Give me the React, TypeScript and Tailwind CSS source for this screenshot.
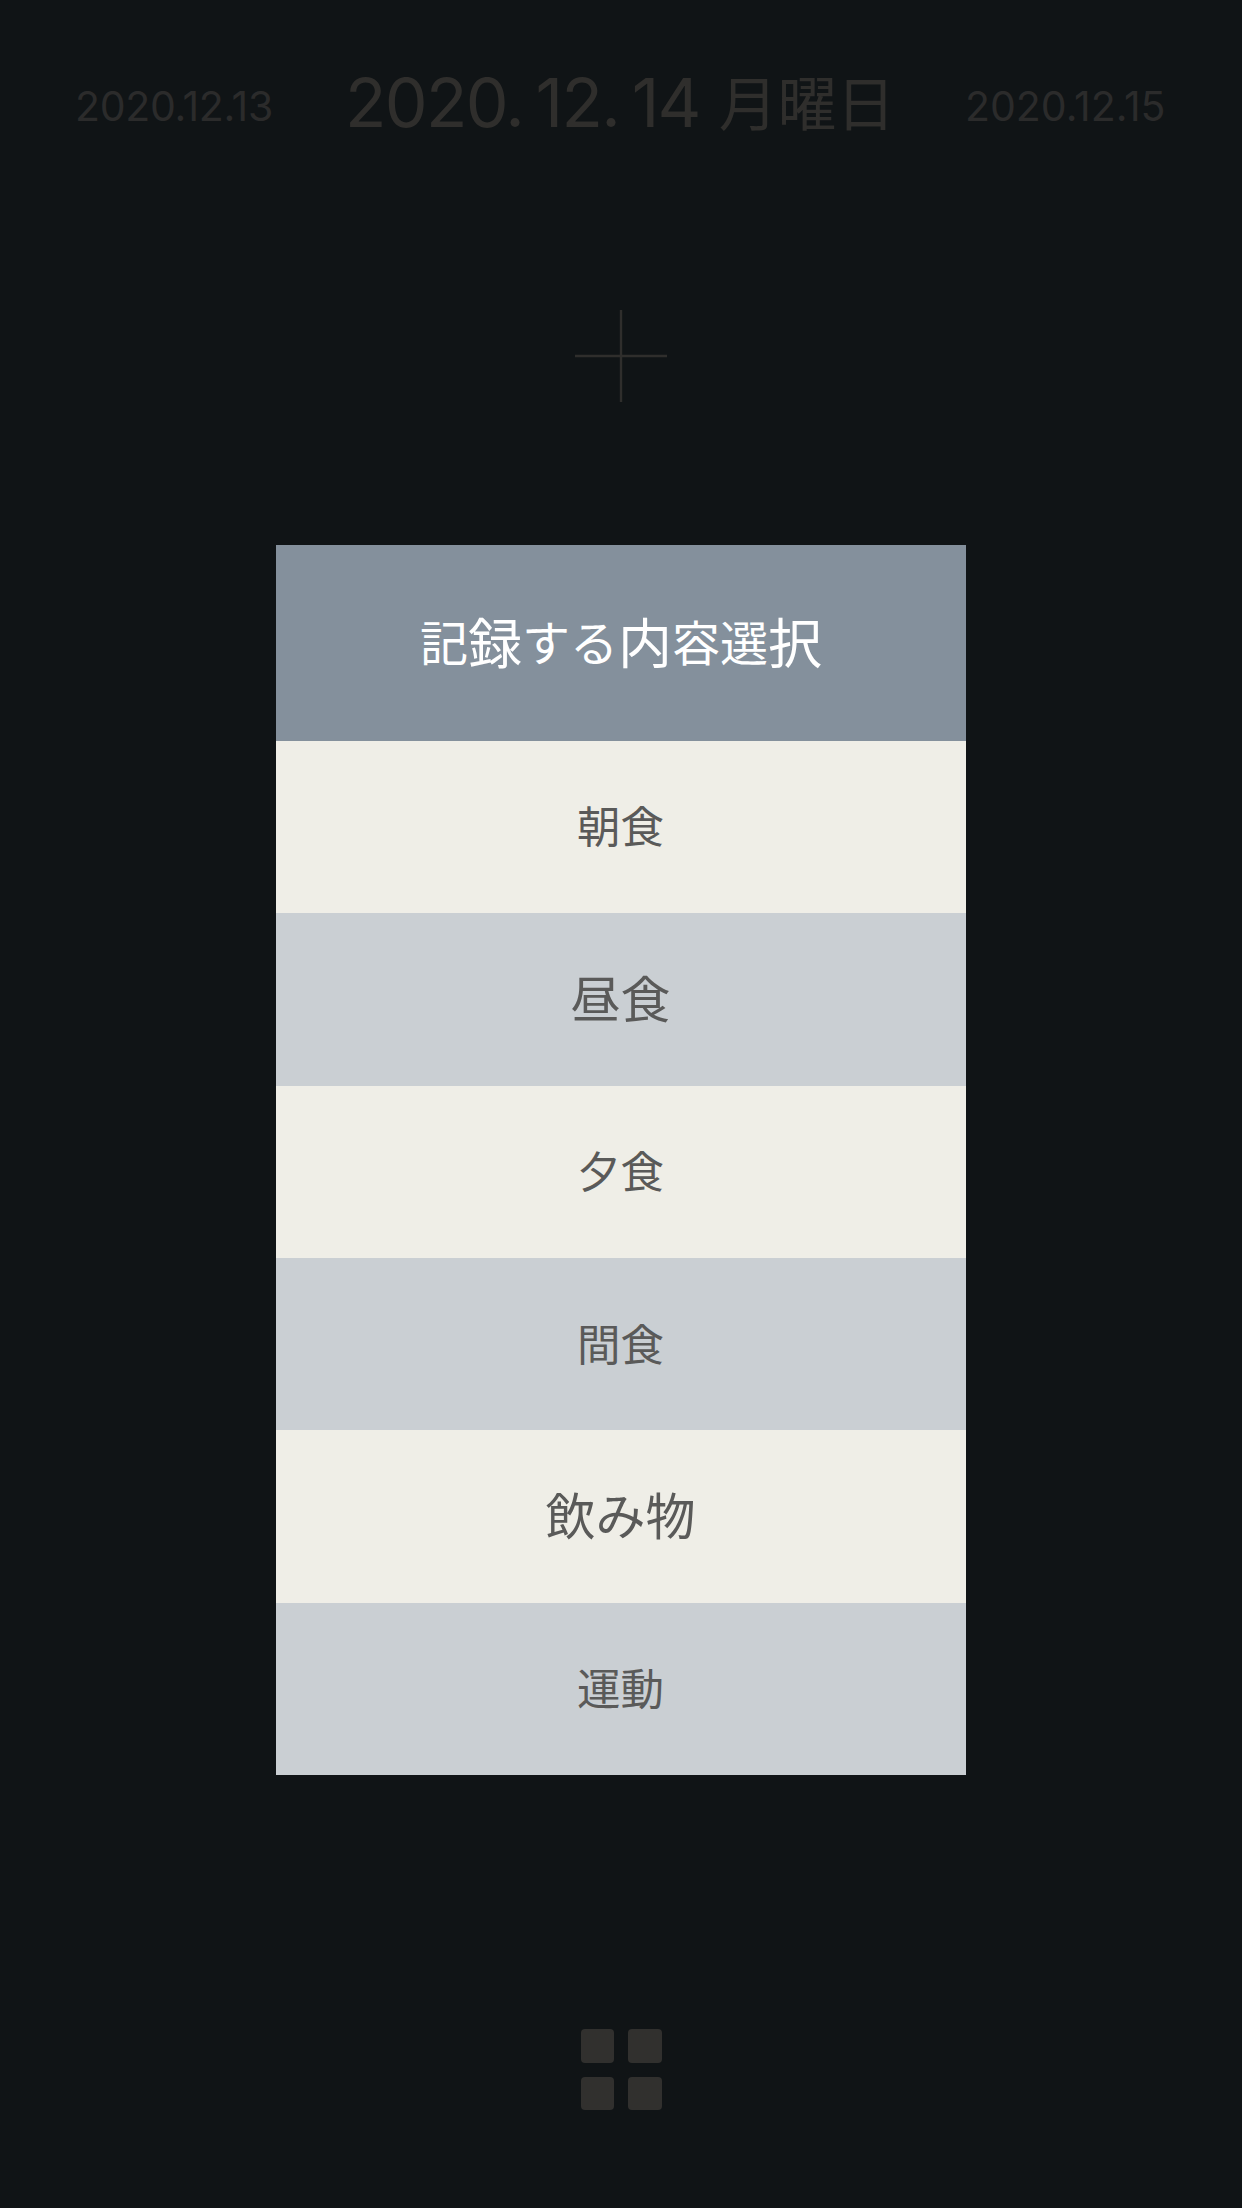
const items = [
  { label: '朝食', className: 'bg-[#efeee7] pt-[1px] text-[43.5px]' },
  { label: '昼食', className: 'bg-[#cacfd3] pt-[2px] text-[50px]' },
  { label: '夕食', className: 'bg-[#efeee7] pt-[2px] text-[43.5px]' },
  { label: '間食', className: 'bg-[#cacfd3] pt-[2px] text-[43.5px]' },
  { label: '飲み物', className: 'bg-[#efeee7] pt-[3px] text-[50px]' },
  { label: '運動', className: 'bg-[#cacfd3] pt-[2px] text-[43.5px]' },
];

export default function App() {
  return (
    <div className="flex h-[2208px] w-[1242px] flex-col items-center bg-[#101416] font-['Inter','Noto_Sans_CJK_JP',sans-serif] text-[#2f2e2c]">
      <header className="flex h-[206px] w-full items-center justify-between pr-[77px] pl-[75px] whitespace-nowrap">
        <span className="w-[200px] pt-[8px] text-[41px] tracking-[-0.3px] text-[#2b2b2b]">2020.12.13</span>
        <h1 className="flex items-center gap-[19px] text-[68px] tracking-[-1.7px]">
          <span className="pb-[2px] [word-spacing:-5px]">2020. 12. 14</span>
          <span className="pt-[4px] text-[59px] tracking-[-0.3px]">月曜日</span>
        </h1>
        <span className="w-[200px] pt-[8px] text-right text-[41px] text-[#2b2b2b]">2020.12.15</span>
      </header>

      <button className="mt-[102.5px]">
        <svg width="94" height="94" viewBox="0 0 94 94" stroke="currentColor" strokeWidth="2.4">
          <path d="M47 1V93M1 47H93" />
        </svg>
      </button>

      <div className="mt-[142.5px] w-[690px]">
        <div className="flex h-[196px] items-center justify-center bg-[#84909c] pt-[2px] text-white">
          <p className="flex items-center text-[48px] leading-none">
            <span>記</span>
            <span className="pt-[2px] text-[54px]">録</span>
            <span>する</span>
            <span className="pt-[2px] text-[54px]">内</span>
            <span>容選</span>
            <span className="pt-[2px] text-[54px]">択</span>
          </p>
        </div>
        {items.map(item => (
          <div key={item.label} className={`flex h-[172.33px] items-center justify-center pr-[1px] text-[#5a5a59] ${item.className}`}>
            {item.label}
          </div>
        ))}
      </div>

      <div className="mt-[254.5px] grid grid-cols-2 gap-[13.5px]">
        <span className="h-[33.75px] w-[33.75px] rounded bg-[#31302e]" />
        <span className="h-[33.75px] w-[33.75px] rounded bg-[#31302e]" />
        <span className="h-[33.75px] w-[33.75px] rounded bg-[#31302e]" />
        <span className="h-[33.75px] w-[33.75px] rounded bg-[#31302e]" />
      </div>
    </div>
  );
}
